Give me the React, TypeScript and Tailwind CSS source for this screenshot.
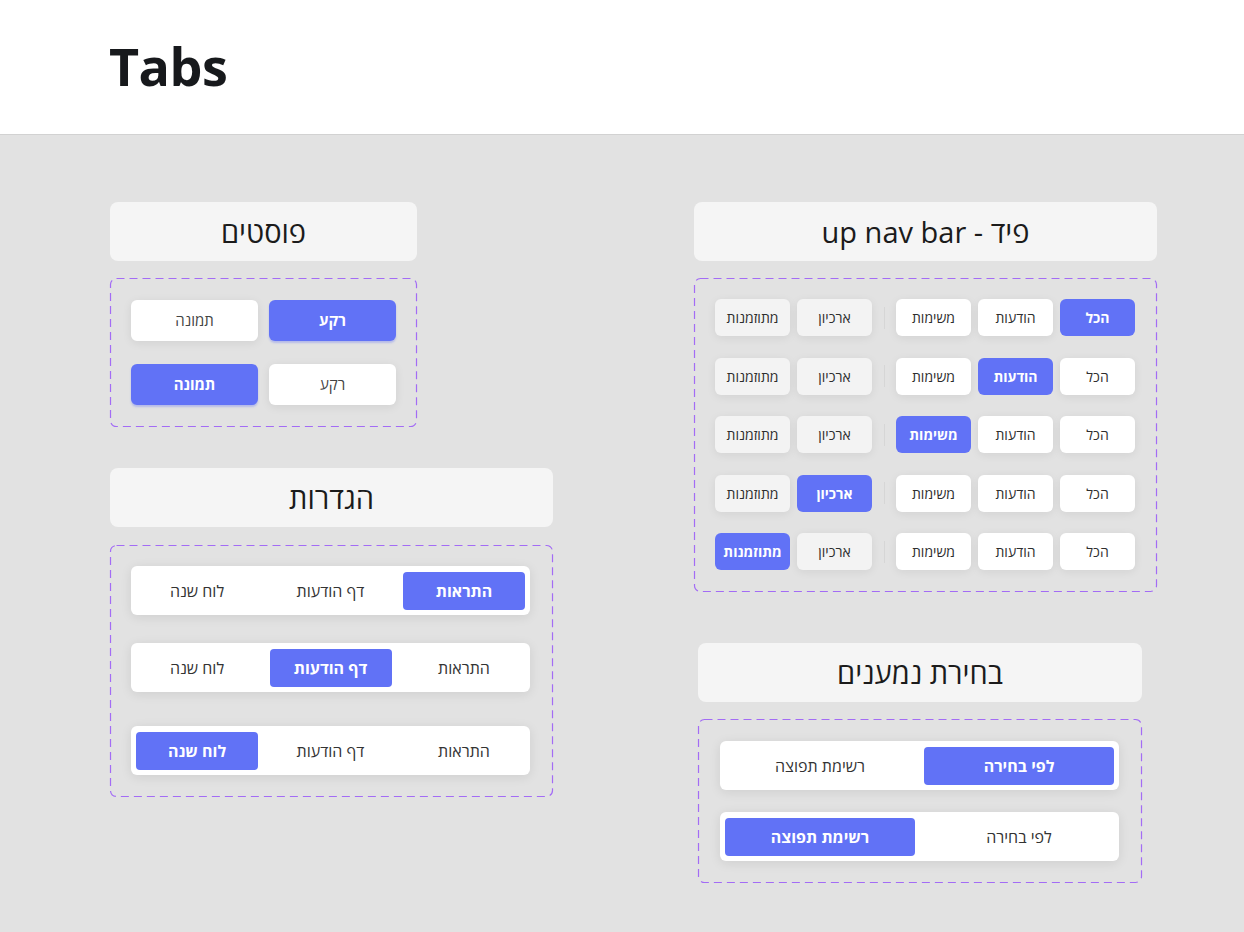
import React from 'react';

const FONT = "font-['Open_Sans','Noto_Sans','DejaVu_Sans',sans-serif]";

const DashedBox: React.FC<{ className?: string; children: React.ReactNode }> = ({ className = '', children }) => (
  <div className={`relative ${className}`}>
    <svg className="absolute inset-0 w-full h-full overflow-visible pointer-events-none" aria-hidden>
      <rect x="0.5" y="0.5" width="100%" height="100%" rx="6" ry="6" fill="none" stroke="#a36cf5" strokeWidth="1.2" strokeDasharray="8 5" style={{ width: 'calc(100% - 1px)', height: 'calc(100% - 1px)' }} />
    </svg>
    {children}
  </div>
);

const TitleCard: React.FC<{ title: string; className?: string }> = ({ title, className = '' }) => (
  <div dir="rtl" className={`h-[59px] rounded-lg bg-[#f5f5f5] flex items-center justify-center text-[29px] text-[#1b1b1b] ${className}`}>
    {title}
  </div>
);

// posts: two buttons per row
const PostButton: React.FC<{ label: string; active?: boolean }> = ({ label, active }) => (
  <div
    className={`w-[127px] h-[41px] rounded-md flex items-center justify-center text-[15px] ${
      active
        ? 'bg-[#6172f6] text-white font-bold shadow-[0_2px_2px_rgba(97,114,246,0.35)]'
        : 'bg-white text-[#444] shadow-[0_2px_10px_rgba(0,0,0,0.08)]'
    }`}
  >
    {label}
  </div>
);

const Segmented: React.FC<{ items: string[]; active: number; segW: string; className?: string }> = ({ items, active, segW, className = '' }) => (
  <div dir="rtl" className={`h-[49px] px-[5px] bg-white rounded-md flex items-center justify-between shadow-[0_2px_12px_rgba(0,0,0,0.09)] ${className}`}>
    {items.map((it, i) => (
      <div
        key={it}
        className={`${segW} h-[38px] rounded-[4px] flex items-center justify-center text-[16px] ${
          i === active ? 'bg-[#6172f6] text-white font-bold' : 'text-[#333]'
        }`}
      >
        {it}
      </div>
    ))}
  </div>
);

const FeedButton: React.FC<{ label: string; active?: boolean; archive?: boolean }> = ({ label, active, archive }) => (
  <div
    className={`w-[75px] h-[37px] rounded-md flex items-center justify-center text-[14px] ${
      active
        ? 'bg-[#6172f6] text-white font-bold'
        : `${archive ? 'bg-[#f3f3f3]' : 'bg-white'} text-[#2e2e2e] shadow-[0_2px_10px_rgba(0,0,0,0.07)]`
    }`}
  >
    {label}
  </div>
);

const feedMain = ['הכל', 'הודעות', 'משימות'];
const feedArchive = ['ארכיון', 'מתוזמנות'];

export default function App() {
  const settings = ['התראות', 'דף הודעות', 'לוח שנה'];
  const recipients = ['לפי בחירה', 'רשימת תפוצה'];

  return (
    <div className={`min-h-screen bg-[#e2e2e2] ${FONT}`}>
      <header className="h-[135px] bg-white border-b border-[#d2d2d2] flex items-center pl-[109px] pb-[2px]">
        <h1 className="text-[52px] font-bold text-[#17191c] tracking-[-0.5px]">Tabs</h1>
      </header>

      <main className="flex gap-[141px] pl-[110px] pt-[67px] pb-[50px]">
        {/* left column */}
        <div className="w-[443px] flex flex-col">
          <TitleCard title="פוסטים" className="w-[307px]" />
          <DashedBox className="w-[307px] mt-[17px] px-[21px] py-[22px]">
            <div dir="rtl" className="flex flex-col gap-[23px]">
              <div className="flex gap-[11px]">
                <PostButton label="רקע" active />
                <PostButton label="תמונה" />
              </div>
              <div className="flex gap-[11px]">
                <PostButton label="רקע" />
                <PostButton label="תמונה" active />
              </div>
            </div>
          </DashedBox>

          <TitleCard title="הגדרות" className="mt-[41px]" />
          <DashedBox className="mt-[18px] pl-[21px] pr-[23px] pt-[21px] pb-[22px]">
            <Segmented items={settings} active={0} segW="w-[122px]" />
            <Segmented items={settings} active={1} segW="w-[122px]" className="mt-[28px]" />
            <Segmented items={settings} active={2} segW="w-[122px]" className="mt-[34px]" />
          </DashedBox>
        </div>

        {/* right column */}
        <div className="w-[463px] flex flex-col">
          <TitleCard title="פיד - up nav bar" />
          <DashedBox className="mt-[17px] pl-[21px] pr-[22px] pt-[21px] pb-[22px]">
            <div className="flex flex-col gap-[21.5px]">
              {[0, 1, 2, 3, 4].map((row) => (
                <div key={row} dir="rtl" className="flex items-center gap-[7px]">
                  {feedMain.map((l, i) => (
                    <FeedButton key={l} label={l} active={row === i} />
                  ))}
                  <div className="w-[10px] flex justify-center">
                    <div className="w-px h-[22px] bg-[#d6d6d6]" />
                  </div>
                  {feedArchive.map((l, i) => (
                    <FeedButton key={l} label={l} archive active={row === i + 3} />
                  ))}
                </div>
              ))}
            </div>
          </DashedBox>

          <TitleCard title="בחירת נמענים" className="mt-[51px] ml-[4px] w-[444px]" />
          <DashedBox className="mt-[17px] ml-[4px] w-[444px] pl-[22px] pr-[23px] py-[22px]">
            <Segmented items={recipients} active={0} segW="w-[190px]" />
            <Segmented items={recipients} active={1} segW="w-[190px]" className="mt-[22px]" />
          </DashedBox>
        </div>
      </main>
    </div>
  );
}
